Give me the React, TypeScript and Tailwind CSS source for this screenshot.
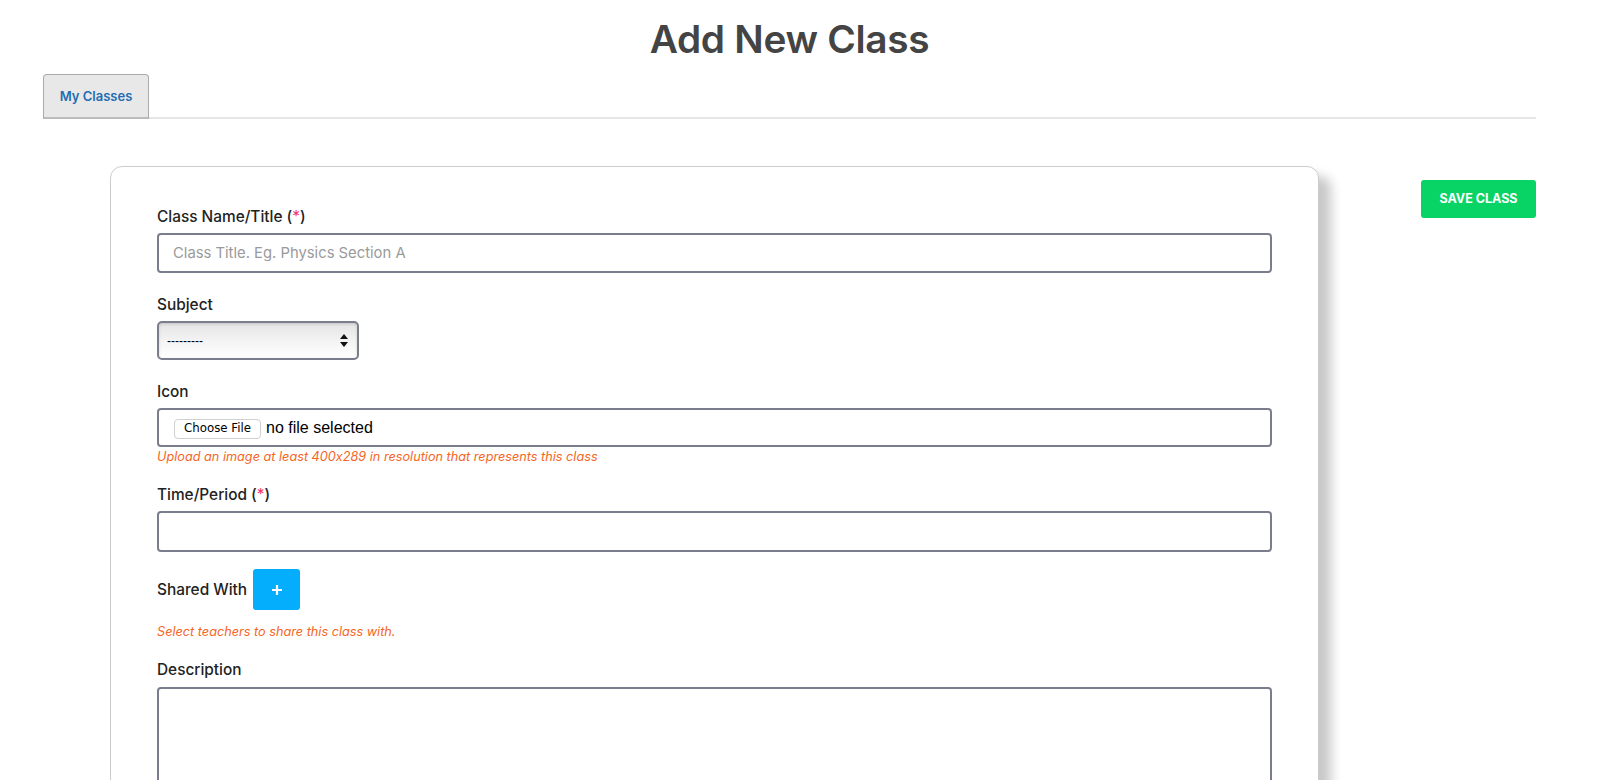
import { useState } from "react";

const font = { fontFamily: "Inter, 'Liberation Sans', sans-serif" };

const Label = ({ text, required }: { text: string; required?: boolean }) => {
  return (
    <label className="block text-[15.4px] leading-5 font-medium text-[#222]">
      {text}
      {required && (
        <>
          {" ("}
          <span className="text-[#f0366a] font-normal">*</span>
          {")"}
        </>
      )}
    </label>
  );
};

const Help = ({ text }: { text: string }) => {
  return (
    <p className="text-[12.7px] leading-4 italic text-[#f5661f] [font-feature-settings:'calt'_0]">
      {text}
    </p>
  );
};

const App = () => {
  const [title, setTitle] = useState("");
  const [period, setPeriod] = useState("");

  return (
    <div className="min-h-screen bg-white text-[#222]" style={font}>
      <div className="pl-[43px] pr-[64px]">
        {/* heading */}
        <h1 className="pt-[14px] text-center text-[38.8px] leading-[50px] font-semibold tracking-[-0.3px] text-[#444]">
          Add New Class
        </h1>

        {/* tabs */}
        <div className="mt-[10px] flex border-b-2 border-[#e6e6e6]">
          <div className="w-[106px] h-[45px] -mb-[2px] flex items-center justify-center bg-[#e8e8e8] border border-b-2 border-[#aaa] border-b-[#bbb] rounded-t-[4px]">
            <span className="mt-[2px] text-[13px] font-semibold text-[#1f6db3]">My Classes</span>
          </div>
        </div>

        {/* body */}
        <div className="mt-[47px] flex items-start">
          <div className="ml-[67px] w-[1209px] bg-white border border-[#ccc] rounded-[12px] shadow-[12px_10px_12px_rgba(0,0,0,0.22)] pl-[46px] pr-[46px] pt-[40px] pb-[40px]">
            {/* title */}
            <Label text="Class Name/Title" required />
            <input
              value={title}
              onChange={(e) => setTitle(e.target.value)}
              placeholder="Class Title. Eg. Physics Section A"
              className="mt-[6px] block w-full h-[40px] px-[14px] text-[14.8px] border-2 border-[#7a7e8c] rounded-[4px] outline-none placeholder:text-[#9a9a9a]"
            />

            {/* subject */}
            <div className="mt-[22px]">
              <Label text="Subject" />
            </div>
            <div className="mt-[6px] w-[202px] h-[39px] flex items-center justify-between pl-[8px] pr-[9px] border-2 border-[#7a7e8c] rounded-[5px] bg-gradient-to-b from-[#e4e4e4] via-[#f3f3f3] to-white shadow-[inset_0_1px_3px_rgba(0,0,0,0.15)]">
              <span className="text-[12px] text-black" style={{ fontFamily: "'Liberation Sans', sans-serif" }}>
                ---------
              </span>
              <svg width="8" height="13" viewBox="0 0 8 13">
                <path d="M4 0 L8 5 L0 5 Z" fill="#111" />
                <path d="M0 8 L8 8 L4 13 Z" fill="#111" />
              </svg>
            </div>

            {/* icon */}
            <div className="mt-[22px]">
              <Label text="Icon" />
            </div>
            <div className="mt-[6px] w-full h-[39px] flex items-center gap-[5px] pl-[15px] border-2 border-[#7a7e8c] rounded-[4px]">
              <button
                className="h-[20px] px-[9px] mt-[2px] leading-none text-black bg-white border border-[#d0d0d0] rounded-[4px]"
                style={{ fontFamily: "'DejaVu Sans', sans-serif", fontSize: "11.8px" }}
              >
                Choose File
              </button>
              <span className="text-[16px] text-black" style={{ fontFamily: "'Liberation Sans', sans-serif" }}>
                no file selected
              </span>
            </div>
            <div className="mt-[2px]">
              <Help text="Upload an image at least 400x289 in resolution that represents this class" />
            </div>

            {/* time */}
            <div className="mt-[20px]">
              <Label text="Time/Period" required />
            </div>
            <input
              value={period}
              onChange={(e) => setPeriod(e.target.value)}
              className="mt-[6px] block w-full h-[41px] px-[14px] text-[15px] border-2 border-[#7a7e8c] rounded-[4px] outline-none"
            />

            {/* shared */}
            <div className="mt-[17px] flex items-center gap-[6px]">
              <Label text="Shared With" />
              <button className="w-[47px] h-[41px] flex items-center justify-center bg-[#05adfd] rounded-[3px]">
                <svg width="12" height="12" viewBox="0 0 12 12">
                  <path d="M6 1 V11 M1 6 H11" stroke="white" strokeWidth="2.2" />
                </svg>
              </button>
            </div>
            <div className="mt-[14px]">
              <Help text="Select teachers to share this class with." />
            </div>

            {/* description */}
            <div className="mt-[20px]">
              <Label text="Description" />
            </div>
            <textarea className="mt-[7px] block w-full h-[140px] border-2 border-[#7a7e8c] rounded-[4px] outline-none resize-none" />
          </div>

          <div className="ml-auto mt-[14px]">
            <button className="w-[115px] h-[38px] bg-[#08d465] rounded-[3px] text-white text-[12.5px] font-bold">
              SAVE CLASS
            </button>
          </div>
        </div>
      </div>
    </div>
  );
};

export default App;
